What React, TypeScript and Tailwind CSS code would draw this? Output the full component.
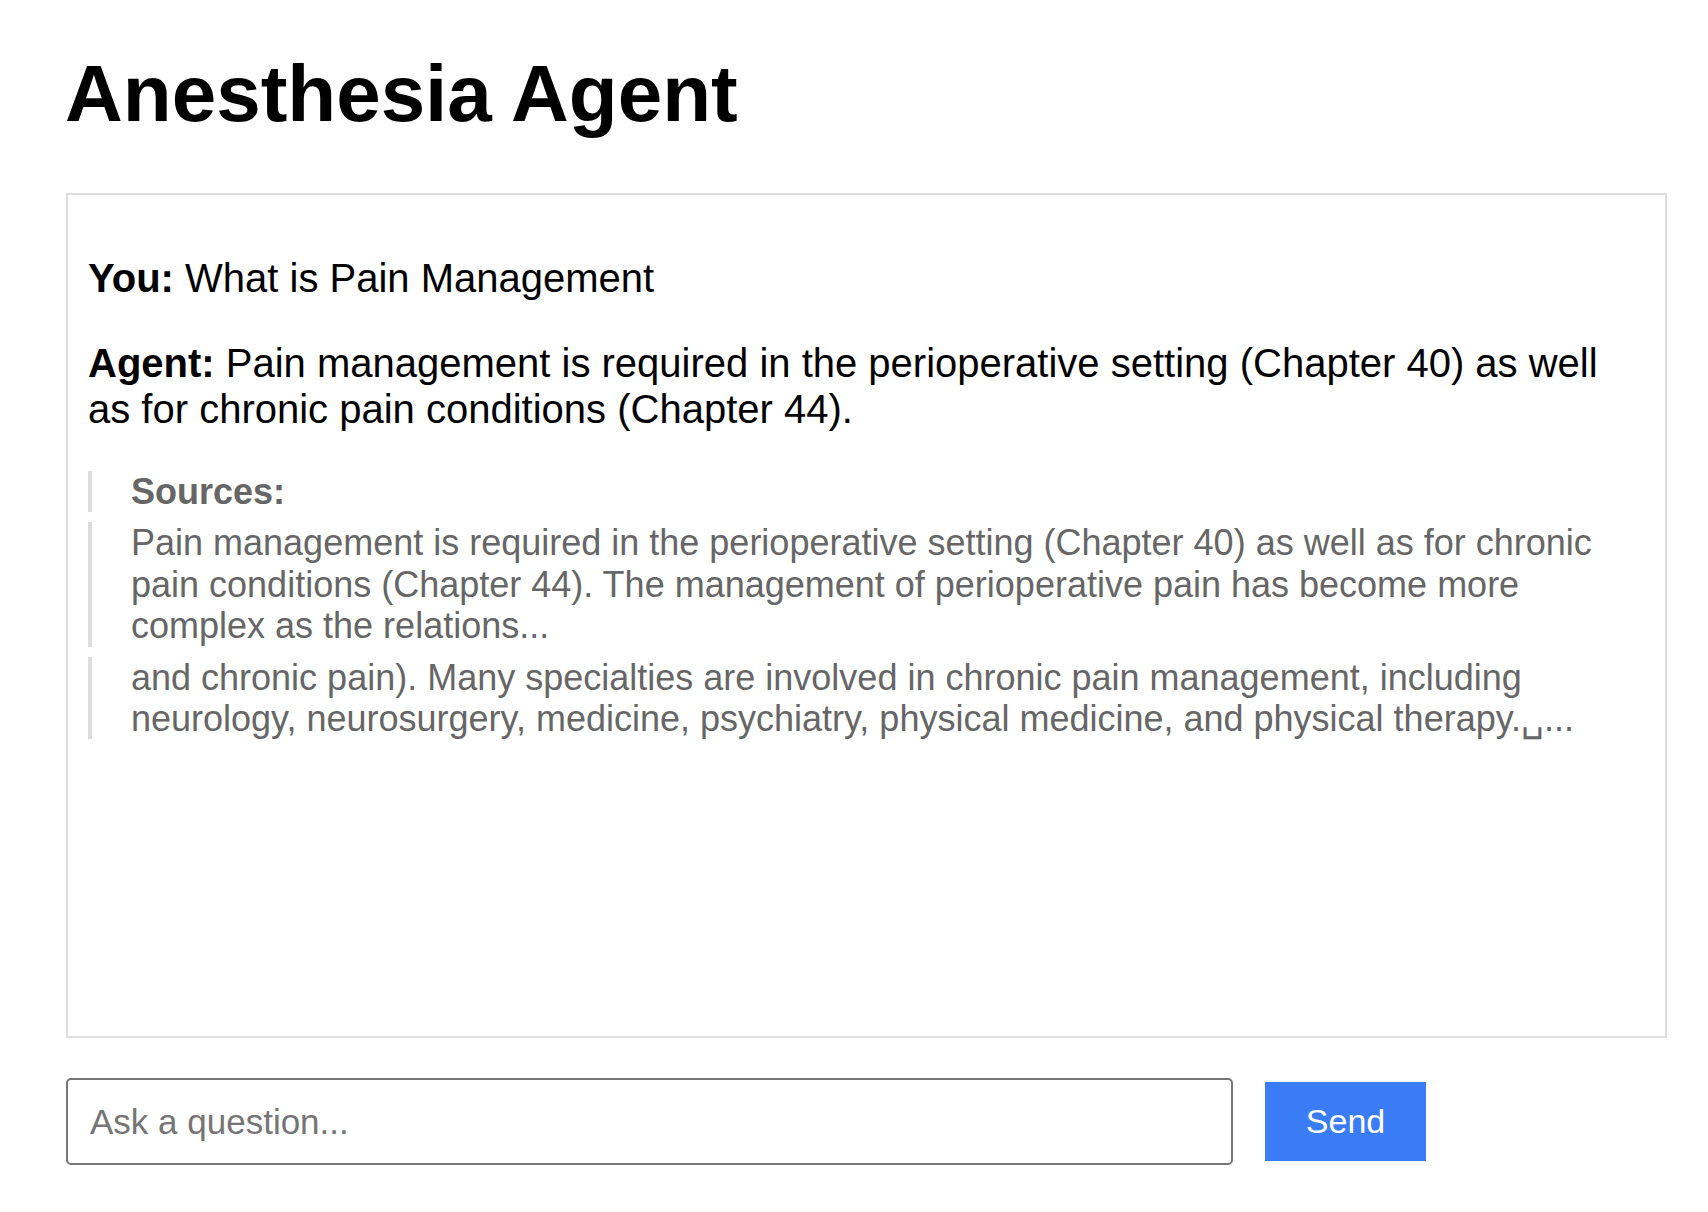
const SOURCES = [
  'Pain management is required in the perioperative setting (Chapter 40) as well as for chronic pain conditions (Chapter 44). The management of perioperative pain has become more complex as the relations...',
  'and chronic pain). Many specialties are involved in chronic pain management, including neurology, neurosurgery, medicine, psychiatry, physical medicine, and physical therapy.\u2423...',
]

const SourceItem: React.FC<{children: React.ReactNode}> = ({children}) => {
  return <div className="border-l-4 border-[#dddddd] pl-[39px] text-[36px] leading-[41.4px] text-[#666666] mt-[10px] first:mt-0">
    {children}
  </div>
}

export default function App() {
  return (
    <div className="min-h-[1212px] bg-white px-[66px] pt-[48px] font-['Liberation_Sans',Arial,sans-serif] text-black">
      <h1 className="text-[80px] leading-[92px] font-bold mb-[53px] -ml-px">Anesthesia Agent</h1>

      <div className="w-[1601px] h-[845px] border-2 border-[#dddddd] pt-[60px] px-[20px] overflow-y-auto">
        <p className="text-[40px] leading-[46px]">
          <strong>You:</strong> What is Pain Management
        </p>
        <p className="text-[40px] leading-[46px] mt-[39px]">
          <strong>Agent:</strong> Pain management is required in the perioperative setting (Chapter 40) as well as for chronic pain conditions (Chapter 44).
        </p>
        <div className="mt-[39px]">
          <SourceItem><strong>Sources:</strong></SourceItem>
          {SOURCES.map((s, i) => <SourceItem key={i}>{s}</SourceItem>)}
        </div>
      </div>

      <div className="flex items-center gap-[32px] mt-[40px]">
        <input
          type="text"
          placeholder="Ask a question..."
          className="w-[1167px] h-[87px] border-2 border-[#767676] rounded-[5px] px-[22px] text-[35px] placeholder:text-[#757575] outline-none"
        />
        <button className="w-[161px] h-[79px] bg-[#3a7cf6] text-white text-[34px]">Send</button>
      </div>
    </div>
  )
}
